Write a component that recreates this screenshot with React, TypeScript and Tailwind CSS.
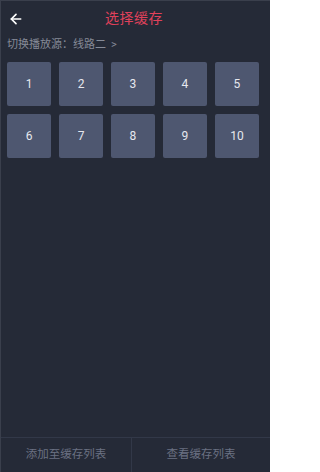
import { ArrowLeft } from "lucide-react";

const font = { fontFamily: 'Roboto, "Noto Sans CJK SC", sans-serif' };

export default function App() {
  const items = Array.from({ length: 10 }, (_, i) => i + 1);

  return (
    <div
      className="flex h-[472px] w-[270px] flex-col border-l border-t border-[#3a3f4c] bg-[#252a37] text-white"
      style={font}
    >
      {/* Header */}
      <div className="relative flex h-[34px] shrink-0 items-center justify-center">
        <ArrowLeft className="absolute left-[7px] top-[10px] h-[16px] w-[16px] text-white" strokeWidth={2.5} />
        <span className="pr-[3px] text-[14px] leading-none tracking-[0.5px] text-[#e0415b]">选择缓存</span>
      </div>

      {/* Source switch */}
      <div className="flex h-[18px] items-center pl-[6px] text-[11px] leading-none text-[#868b98]">
        <span>切换播放源：线路二</span>
        <span className="ml-[5px]">&gt;</span>
      </div>

      {/* Episode grid */}
      <div className="ml-[6px] mt-[9px] grid w-[252px] grid-cols-5 gap-x-[7.75px] gap-y-[8px]">
        {items.map((n) => (
          <button
            key={n}
            className="flex h-[44px] items-center justify-center rounded-[2px] bg-[#4e5770] text-[12px] text-[#e6e8ee]"
          >
            {n}
          </button>
        ))}
      </div>

      <div className="flex-1" />

      {/* Bottom actions */}
      <div className="flex h-[35px] shrink-0 border-t border-[#323848] text-[11.5px] text-[#6b7182]">
        <button className="flex w-[131px] items-center justify-center border-r border-[#323848]">
          添加至缓存列表
        </button>
        <button className="flex flex-1 items-center justify-center">查看缓存列表</button>
      </div>
    </div>
  );
}
